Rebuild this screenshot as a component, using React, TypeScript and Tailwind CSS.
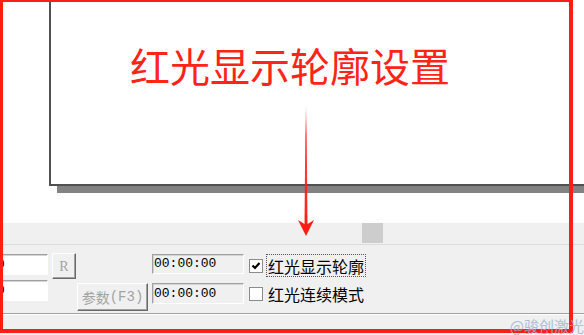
import React from 'react';

const ui = { fontFamily: '"Liberation Mono", "Noto Sans CJK SC", monospace' };
const cjk = { fontFamily: '"Noto Sans CJK SC", "Noto Sans", sans-serif' };

function Sunken({ className, children }: { className: string; children?: React.ReactNode }) {
  return (
    <div
      className={
        'flex items-center border border-t-[#a0a0a0] border-l-[#a0a0a0] border-r-white border-b-white shadow-[inset_1px_1px_0_#d4d4d4] ' +
        className
      }
    >
      {children}
    </div>
  );
}

function Button({ className, children }: { className: string; children: React.ReactNode }) {
  return (
    <div
      className={
        'flex items-center justify-center border border-t-white border-l-white border-r-[#696969] border-b-[#696969] shadow-[inset_-1px_-1px_0_#a0a0a0] bg-[#f0f0f0] text-[#a3a3a3] ' +
        className
      }
    >
      {children}
    </div>
  );
}

function Check({ checked, label, focus }: { checked?: boolean; label: string; focus?: boolean }) {
  return (
    <div className="flex items-center h-[21px]">
      <div className="w-[14px] h-[14px] bg-white border border-[#8c8c8c] flex items-center justify-center">
        {checked && (
          <svg width="10" height="10" viewBox="0 0 10 10">
            <path d="M1.5 4.5 L4 7 L8.5 2" fill="none" stroke="#000" strokeWidth="2.2" />
          </svg>
        )}
      </div>
      <div
        className={
          'ml-[4px] px-[1px] h-[21px] flex items-center text-[16px] leading-none text-black ' +
          (focus ? 'outline-1 outline-dotted outline-[#555]' : '')
        }
        style={cjk}
      >
        {label}
      </div>
    </div>
  );
}

export default function App() {
  return (
    <div className="relative w-[584px] h-[335px] overflow-hidden bg-white">
      {/* canvas */}
      <div className="h-[223px] bg-white">
        <div className="ml-[49px] w-[580px] h-[186px] bg-white border-l-2 border-b-2 border-[#505050] shadow-[8px_7px_0_#828282]">
          <div className="pt-[45px] pl-[79px] text-[40px] leading-none text-[#ff2418]" style={cjk}>
            红光显示轮廓设置
          </div>
        </div>
      </div>

      {/* scroll bar */}
      <div className="h-[21px] bg-[#f0f0f0]">
        <div className="ml-[362px] w-[21px] h-[20px] bg-[#cdcdcd]" />
      </div>
      <div className="h-px bg-[#dcdcdc]" />

      {/* controls */}
      <div className="h-[68px] bg-[#f0f0f0] flex items-start" style={ui}>
        <div className="mt-[9px] flex flex-col gap-[5px]">
          <Sunken className="w-[70px] h-[21px] -ml-[22px] bg-white pl-[18px] text-[13px] text-black">0</Sunken>
          <Sunken className="w-[70px] h-[21px] -ml-[22px] bg-white pl-[18px] text-[13px] text-black">0</Sunken>
        </div>
        <div className="mt-[8px] w-[104px] flex flex-col">
          <Button className="ml-[4px] w-[24px] h-[26px] text-[14px]">
            <span style={{ fontFamily: '"Liberation Serif", serif' }}>R</span>
          </Button>
          <Button className="ml-[29px] mt-[4px] w-[71px] h-[28px] text-[14px]">
            <span style={cjk}>参数</span>
            <span>(F3)</span>
          </Button>
        </div>
        <div className="mt-[9px] flex flex-col gap-[9px]">
          <Sunken className="w-[92px] h-[20px] bg-[#f0f0f0] pl-[1px] text-[13px] text-black">00:00:00</Sunken>
          <Sunken className="w-[92px] h-[21px] bg-[#f0f0f0] pl-[1px] text-[13px] text-black">00:00:00</Sunken>
        </div>
        <div className="ml-[5px] mt-[10px] flex flex-col gap-[7px]">
          <Check checked focus label="红光显示轮廓" />
          <Check label="红光连续模式" />
        </div>
      </div>
      <div className="h-px bg-[#a0a0a0]" />
      <div className="h-px bg-white" />
      <div className="h-[20px] bg-[#f0f0f0]" />

      {/* annotation overlay */}
      <div className="absolute left-0 top-0 w-[573px] h-[333px] border-l-[3px] border-t-[2px] border-r-[4px] border-b-[4px] border-[#ff1e14] pointer-events-none" />
      <svg className="absolute left-[296px] top-[104px]" width="20" height="134" viewBox="0 0 20 134">
        <defs>
          <linearGradient id="shaft" x1="0" y1="0" x2="0" y2="1">
            <stop offset="0" stopColor="#ff1e14" stopOpacity="0" />
            <stop offset="0.25" stopColor="#ff1e14" stopOpacity="0.8" />
            <stop offset="1" stopColor="#ff1e14" />
          </linearGradient>
        </defs>
        <polygon points="9.5,2 10.5,2 11.5,122 8.5,122" fill="url(#shaft)" />
        <polygon points="2,116 10,121 18,116 10,132" fill="#ff1e14" />
      </svg>
      <div
        className="absolute right-[0px] bottom-[2px] text-[15px] leading-none text-[#9fb2cf] opacity-80"
        style={cjk}
      >
        @骏创激光
      </div>
    </div>
  );
}
